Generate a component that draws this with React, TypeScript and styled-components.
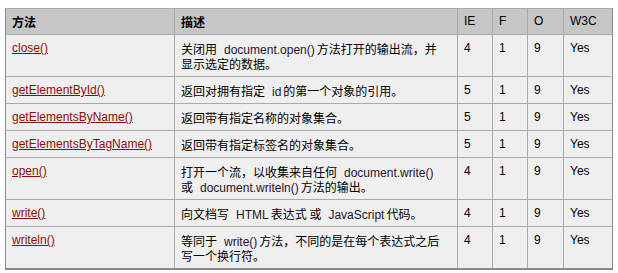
import styled, { createGlobalStyle } from "styled-components";

const GlobalStyle = createGlobalStyle`
  body {
    margin: 0;
    background: #ffffff;
    font-family: "Liberation Sans", Arial, "Noto Sans CJK SC", sans-serif;
  }
`;

const Page = styled.div`
  padding: 8px 6px 8px 5px;
`;

const Table = styled.table`
  width: 607px;
  border-collapse: collapse;
  table-layout: fixed;
  font-size: 12px;
  line-height: 15px;
  color: #000;
`;

const HeadCell = styled.th<{ plain?: boolean }>`
  text-align: left;
  vertical-align: top;
  background: #c6c6c6;
  border: 1px solid #a9a9a9;
  padding: 5px 5px 5px 6px;
  font-weight: ${props => (props.plain ? "normal" : "bold")};
  &:first-child {
    border-left-color: #888;
  }
  &:last-child {
    border-right-color: #888;
  }
`;

const Cell = styled.td`
  vertical-align: top;
  background: #efefef;
  border: 1px solid #a9a9a9;
  padding: 6px 5px 5px 6px;
  &:first-child {
    border-left-color: #888;
  }
  &:last-child {
    border-right-color: #888;
  }
`;

const Row = styled.tr`
  &:last-child td {
    border-bottom: 2px solid #888;
  }
`;

const Line = styled.div<{ cjk?: boolean }>`
  height: 15px;
  line-height: 15px;
  white-space: nowrap;
  font-size: 12px;
  font-family: ${props =>
    props.cjk
      ? `"Noto Sans CJK SC", "Liberation Sans", sans-serif`
      : `"Liberation Sans", Arial, sans-serif`};
`;

const Method = styled.a`
  color: #900b09;
  text-decoration: underline;
`;

const Code = styled.span`
  font-family: "Liberation Sans", Arial, sans-serif;
  color: #1e1433;
  margin: 0 2px 0 7px;
`;

type Part = string | { code: string };

interface MethodInfo {
  name: string;
  desc: Part[][];
  ie: string;
  f: string;
  o: string;
  w3c: string;
}

const methods: MethodInfo[] = [
  {
    name: "close()",
    desc: [
      ["关闭用", { code: "document.open()" }, "方法打开的输出流，并"],
      ["显示选定的数据。"],
    ],
    ie: "4",
    f: "1",
    o: "9",
    w3c: "Yes",
  },
  {
    name: "getElementById()",
    desc: [["返回对拥有指定", { code: "id" }, "的第一个对象的引用。"]],
    ie: "5",
    f: "1",
    o: "9",
    w3c: "Yes",
  },
  {
    name: "getElementsByName()",
    desc: [["返回带有指定名称的对象集合。"]],
    ie: "5",
    f: "1",
    o: "9",
    w3c: "Yes",
  },
  {
    name: "getElementsByTagName()",
    desc: [["返回带有指定标签名的对象集合。"]],
    ie: "5",
    f: "1",
    o: "9",
    w3c: "Yes",
  },
  {
    name: "open()",
    desc: [
      ["打开一个流，以收集来自任何", { code: "document.write()" }],
      ["或", { code: "document.writeln()" }, "方法的输出。"],
    ],
    ie: "4",
    f: "1",
    o: "9",
    w3c: "Yes",
  },
  {
    name: "write()",
    desc: [["向文档写", { code: "HTML" }, "表达式 或", { code: "JavaScript" }, "代码。"]],
    ie: "4",
    f: "1",
    o: "9",
    w3c: "Yes",
  },
  {
    name: "writeln()",
    desc: [
      ["等同于", { code: "write()" }, "方法，不同的是在每个表达式之后"],
      ["写一个换行符。"],
    ],
    ie: "4",
    f: "1",
    o: "9",
    w3c: "Yes",
  },
];

function App() {
  return (
    <>
      <GlobalStyle />
      <Page>
        <Table>
          <colgroup>
            <col style={{ width: 169 }} />
            <col style={{ width: 283 }} />
            <col style={{ width: 35 }} />
            <col style={{ width: 35 }} />
            <col style={{ width: 36 }} />
            <col style={{ width: 49 }} />
          </colgroup>
          <thead>
            <tr>
              <HeadCell>
                <Line cjk>方法</Line>
              </HeadCell>
              <HeadCell>
                <Line cjk>描述</Line>
              </HeadCell>
              <HeadCell plain>
                <Line>IE</Line>
              </HeadCell>
              <HeadCell plain>
                <Line>F</Line>
              </HeadCell>
              <HeadCell plain>
                <Line>O</Line>
              </HeadCell>
              <HeadCell plain>
                <Line>W3C</Line>
              </HeadCell>
            </tr>
          </thead>
          <tbody>
            {methods.map(m => (
              <Row key={m.name}>
                <Cell>
                  <Line>
                    <Method href="#">{m.name}</Method>
                  </Line>
                </Cell>
                <Cell>
                  {m.desc.map((line, i) => (
                    <Line cjk key={i}>
                      {line.map((p, j) =>
                        typeof p === "string" ? (
                          <span key={j}>{p}</span>
                        ) : (
                          <Code key={j}>{p.code}</Code>
                        )
                      )}
                    </Line>
                  ))}
                </Cell>
                <Cell>
                  <Line>{m.ie}</Line>
                </Cell>
                <Cell>
                  <Line>{m.f}</Line>
                </Cell>
                <Cell>
                  <Line>{m.o}</Line>
                </Cell>
                <Cell>
                  <Line>{m.w3c}</Line>
                </Cell>
              </Row>
            ))}
          </tbody>
        </Table>
      </Page>
    </>
  );
}

export default App;
